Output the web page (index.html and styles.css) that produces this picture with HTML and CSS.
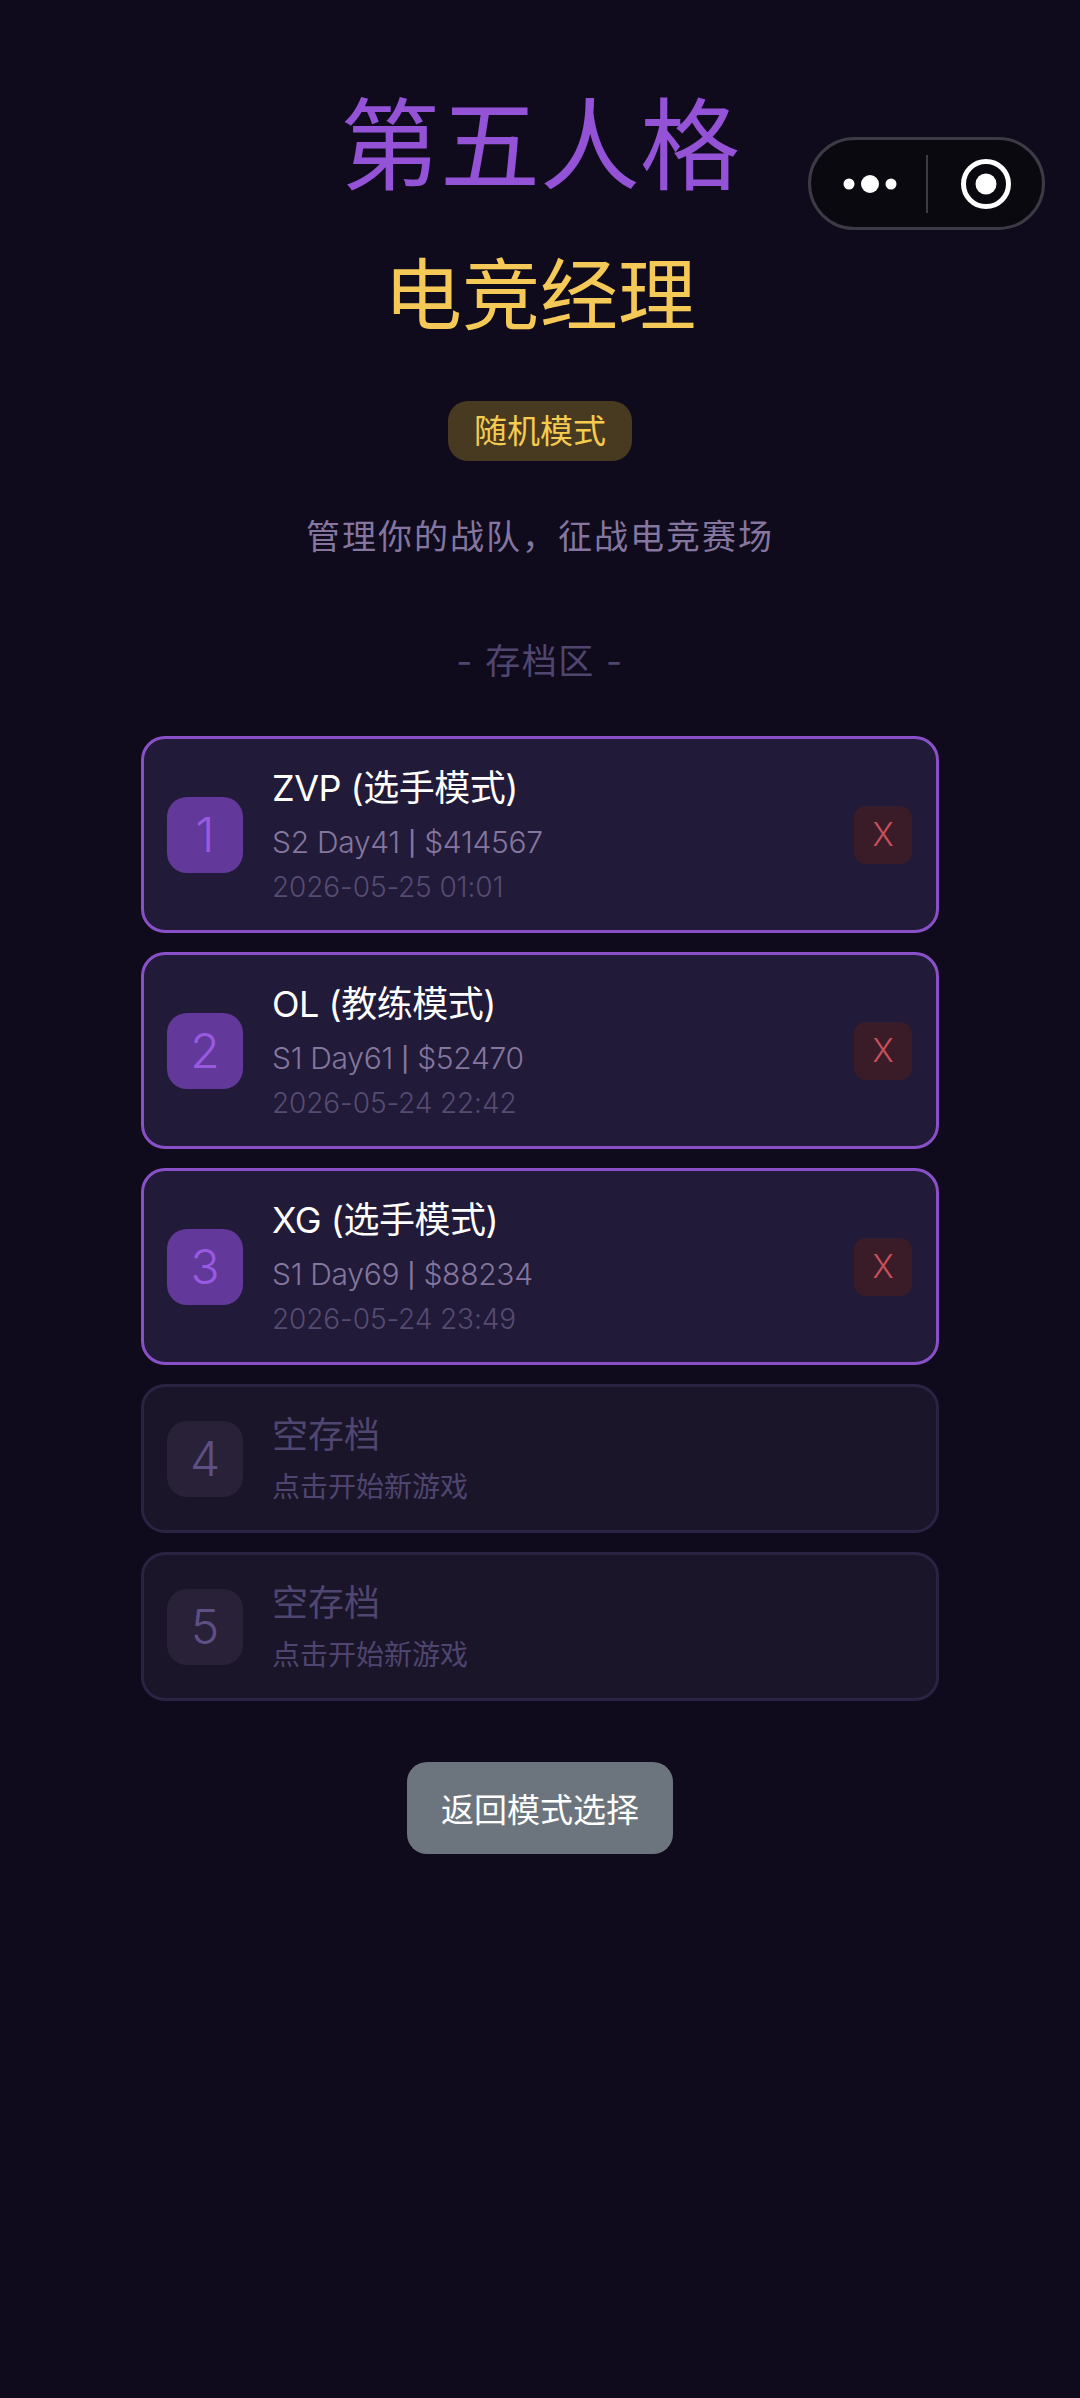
FILE: index.html
```html
<!DOCTYPE html>
<html lang="zh-CN">
<head>
<meta charset="UTF-8" />
<title>第五人格 电竞经理</title>
<link rel="stylesheet" href="styles.css">
</head>
<body>

<div class="capsule">
  <svg class="capsule-icon" width="84" height="30" viewBox="0 0 84 30">
    <circle cx="21" cy="15" r="5.5" fill="#fff"/>
    <circle cx="42" cy="15" r="9" fill="#fff"/>
    <circle cx="63" cy="15" r="5.5" fill="#fff"/>
  </svg>
  <div class="capsule-line"></div>
  <svg class="capsule-icon" width="56" height="56" viewBox="0 0 56 56">
    <circle cx="28" cy="28" r="22.5" fill="none" stroke="#fff" stroke-width="5"/>
    <circle cx="28" cy="28" r="10.5" fill="#fff"/>
  </svg>
</div>

<div class="page">
  <h1 class="title">第五人格</h1>
  <h2 class="subtitle">电竞经理</h2>
  <div class="badge">随机模式</div>
  <p class="desc">管理你的战队，征战电竞赛场</p>
  <div class="section">- 存档区 -</div>

  <div class="slots">
    <div class="slot">
      <div class="slot-num">1</div>
      <div class="slot-info">
        <div class="slot-name">ZVP (选手模式)</div>
        <div class="slot-detail">S2 Day41 <span class="sep">|</span> $414567</div>
        <div class="slot-date">2026-05-25 01:01</div>
      </div>
      <div class="slot-del">X</div>
    </div>
    <div class="slot">
      <div class="slot-num">2</div>
      <div class="slot-info">
        <div class="slot-name">OL (教练模式)</div>
        <div class="slot-detail">S1 Day61 <span class="sep">|</span> $52470</div>
        <div class="slot-date">2026-05-24 22:42</div>
      </div>
      <div class="slot-del">X</div>
    </div>
    <div class="slot">
      <div class="slot-num">3</div>
      <div class="slot-info">
        <div class="slot-name">XG (选手模式)</div>
        <div class="slot-detail">S1 Day69 <span class="sep">|</span> $88234</div>
        <div class="slot-date">2026-05-24 23:49</div>
      </div>
      <div class="slot-del">X</div>
    </div>
    <div class="slot empty">
      <div class="slot-num">4</div>
      <div class="slot-info">
        <div class="slot-name">空存档</div>
        <div class="slot-hint">点击开始新游戏</div>
      </div>
    </div>
    <div class="slot empty">
      <div class="slot-num">5</div>
      <div class="slot-info">
        <div class="slot-name">空存档</div>
        <div class="slot-hint">点击开始新游戏</div>
      </div>
    </div>
  </div>

  <button class="back">返回模式选择</button>
</div>

</body>
</html>
```

FILE: styles.css
```css
* {
  box-sizing: border-box;
}
body {
  margin: 0;
  height: 2398px;
  overflow: hidden;
  position: relative;
  background: #0f0b1d;
  font-family: "Inter", "Noto Sans CJK SC", sans-serif;
}
.page {
  display: flex;
  flex-direction: column;
  align-items: center;
  padding-top: 96px;
}
.capsule {
  position: absolute;
  left: 808px;
  top: 137px;
  width: 237px;
  height: 93px;
  display: flex;
  align-items: center;
  padding-left: 17px;
  background: #0a0910;
  border: 3px solid #3c3a44;
  border-radius: 47px;
}
.capsule-icon {
  display: block;
  flex: none;
}
.capsule-line {
  width: 2px;
  height: 58px;
  margin: 0 30px 0 14px;
  background: #3c3a44;
}
.title {
  margin: 0;
  font-size: 100px;
  line-height: 100px;
  font-weight: 400;
  color: #9452d6;
}
.subtitle {
  margin: 60px 0 0;
  font-size: 78px;
  line-height: 80px;
  font-weight: 400;
  color: #f5c957;
}
.badge {
  margin-top: 65px;
  width: 184px;
  height: 60px;
  border-radius: 20px;
  background: #483a20;
  color: #f5cb50;
  font-size: 33px;
  line-height: 60px;
  text-align: center;
}
.desc {
  margin: 54px 0 0;
  font-size: 34px;
  line-height: 44px;
  letter-spacing: 2px;
  color: #84769f;
}
.section {
  margin-top: 80px;
  font-size: 35px;
  line-height: 44px;
  letter-spacing: 1.5px;
  color: #51466f;
}
.slots {
  margin-top: 53px;
  width: 798px;
  display: flex;
  flex-direction: column;
  gap: 19px;
}
.slot {
  display: flex;
  align-items: center;
  padding: 23px 23px;
  background: #211a38;
  border: 3px solid #8a50c8;
  border-radius: 24px;
}
.slot-num {
  flex: none;
  width: 76px;
  height: 76px;
  border-radius: 20px;
  background: #62389a;
  color: #9a5ae0;
  font-size: 48px;
  line-height: 76px;
  font-weight: 300;
  text-align: center;
}
.slot-info {
  flex: 1;
  margin-left: 29px;
}
.slot-name {
  position: relative;
  top: 1px;
  font-size: 36px;
  line-height: 50px;
  letter-spacing: -0.5px;
  color: #fff;
}
.slot-detail {
  margin-top: 8px;
  font-size: 30px;
  line-height: 44px;
  font-weight: 300;
  letter-spacing: -0.3px;
  color: #84769f;
}
.sep {
  font-size: 24px;
  line-height: 0;
  font-weight: 500;
  vertical-align: 1px;
}
.slot-date {
  margin-top: 3px;
  font-size: 28px;
  line-height: 40px;
  font-weight: 300;
  letter-spacing: -0.1px;
  color: #574b72;
}
.slot-del {
  flex: none;
  width: 58px;
  height: 58px;
  margin-right: 1px;
  border-radius: 12px;
  background: #3a1c28;
  color: #c8505c;
  font-size: 32px;
  line-height: 58px;
  font-weight: 300;
  text-align: center;
}
.empty {
  background: #1a1529;
  border-color: #2a2342;
}
.empty .slot-num {
  background: #282138;
  color: #5e4f85;
}
.empty .slot-name {
  color: #51466f;
  letter-spacing: 0;
  top: 0;
}
.slot-hint {
  margin-top: 7px;
  font-size: 28px;
  line-height: 40px;
  color: #4f4570;
}
.back {
  margin-top: 61px;
  width: 266px;
  height: 92px;
  padding: 0;
  border: none;
  border-radius: 20px;
  background: #6c757d;
  color: #fff;
  font-family: inherit;
  font-size: 33px;
}
```
